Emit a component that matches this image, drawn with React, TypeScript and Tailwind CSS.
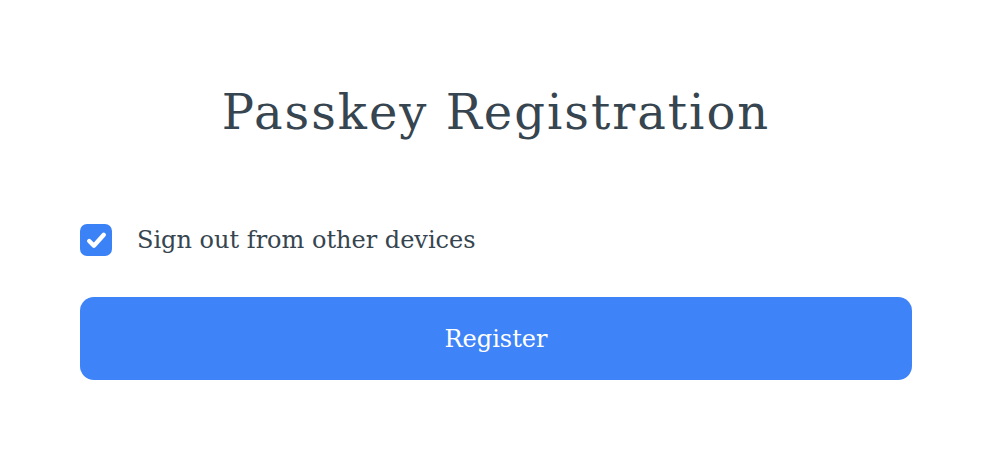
export default function App() {
  return (
    <div className="min-h-screen bg-white px-[80px]" style={{ fontFamily: '"DejaVu Serif", Georgia, serif' }}>
      <div className="w-[832px] pt-[76px]">
        <h1 className="text-center text-[48px] leading-[72px] tracking-[2px] text-[#36454f]">Passkey Registration</h1>
        <label className="mt-[74px] flex items-center gap-[25px]">
          <span className="flex h-[32px] w-[32px] items-center justify-center rounded-[7px] bg-[#3b82f6]">
            <svg viewBox="0 0 24 24" className="h-[25px] w-[25px]" fill="none" stroke="white" strokeWidth={4.2} strokeLinecap="round" strokeLinejoin="round">
              <path d="M5 12.5l4.5 4.5L19 6.5" />
            </svg>
          </span>
          <span className="text-[24px] text-[#36454f]">Sign out from other devices</span>
        </label>
        <button className="mt-[39px] h-[83px] w-full rounded-[14px] bg-[#3e83f7] text-[24px] text-white">Register</button>
      </div>
    </div>
  );
}
